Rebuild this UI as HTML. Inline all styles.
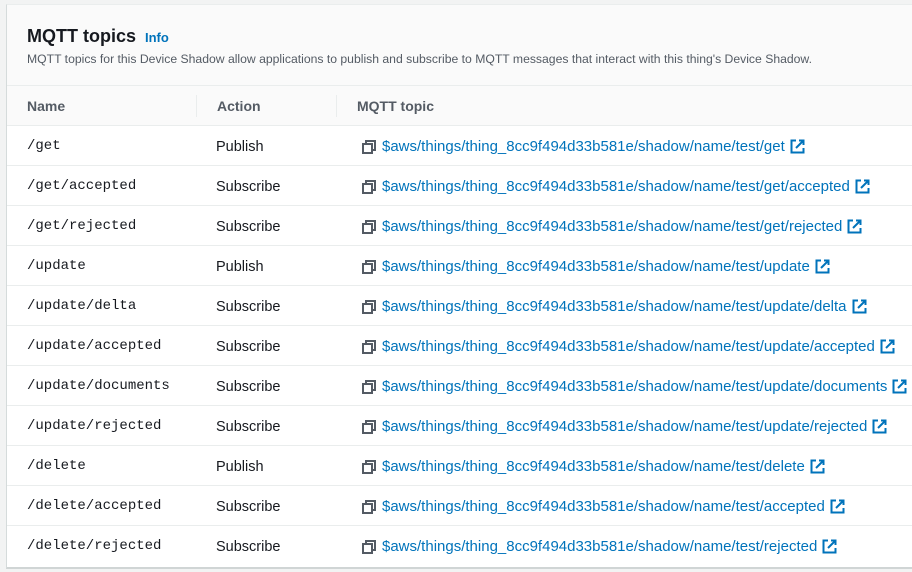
<!DOCTYPE html>
<html><head><style>
body{margin:0;background:#f2f3f3;width:912px;height:572px;overflow:hidden;font-family:"Liberation Sans",sans-serif;}
.card{position:absolute;left:6px;top:4px;width:920px;height:562px;background:#fff;border-left:1px solid #d5dbdb;border-top:1px solid #eaeded;border-bottom:2px solid #d0d5d5;}
.hdr{background:#fafafa;height:80px;border-bottom:1px solid #eaeded;position:relative;}
.title{position:absolute;left:20px;top:21px;font-size:18px;font-weight:bold;color:#16191f;}
.info{font-size:13px;color:#0073bb;margin-left:4px;font-weight:bold;}
.desc{position:absolute;left:20px;top:47px;font-size:12.2px;color:#545b64;}
.th{height:39px;background:#fafafa;border-bottom:1px solid #eaeded;position:relative;font-size:14px;font-weight:bold;color:#545b64;}
.th span{position:absolute;top:12px;}
.sep{position:absolute;top:9px;width:1px;height:22px;background:#eaeded;}
.row{height:39px;border-bottom:1px solid #eaeded;position:relative;font-size:14.5px;color:#16191f;}
.row .n{position:absolute;left:20px;top:12px;font-family:"Liberation Mono",monospace;font-size:14px;}
.row .a{position:absolute;left:209px;top:13px;}
.row .t{position:absolute;left:355px;top:12px;color:#0073bb;white-space:nowrap;display:flex;align-items:center;font-size:15px;}
.row:last-child{border-bottom:none;}
svg{display:block}
</style></head><body>
<div class="card">
<div class="hdr"><div class="title">MQTT topics <span class="info">Info</span></div>
<div class="desc">MQTT topics for this Device Shadow allow applications to publish and subscribe to MQTT messages that interact with this thing's Device Shadow.</div></div>
<div class="th"><span style="left:20px">Name</span><div class="sep" style="left:189px"></div><span style="left:210px">Action</span><div class="sep" style="left:329px"></div><span style="left:350px">MQTT topic</span></div>
<div id="rows"></div>
</div>
<script>
var d=[["/get","Publish","/get"],["/get/accepted","Subscribe","/get/accepted"],["/get/rejected","Subscribe","/get/rejected"],["/update","Publish","/update"],["/update/delta","Subscribe","/update/delta"],["/update/accepted","Subscribe","/update/accepted"],["/update/documents","Subscribe","/update/documents"],["/update/rejected","Subscribe","/update/rejected"],["/delete","Publish","/delete"],["/delete/accepted","Subscribe","/accepted"],["/delete/rejected","Subscribe","/rejected"]];
var cp='<svg width="14" height="14" viewBox="0 0 14 14" style="margin-right:6px"><rect x="4" y="1" width="9" height="9" fill="none" stroke="#545b64" stroke-width="2"/><rect x="1" y="4" width="9" height="9" fill="#fff" stroke="#545b64" stroke-width="2"/></svg>';
var ex='<svg width="15" height="15" viewBox="0 0 15 15" style="margin-left:5px"><path d="M6 1.5H1.5v12h12V9" fill="none" stroke="#0073bb" stroke-width="2"/><path d="M9 1.5h4.5V6M13.5 1.5L6 9" fill="none" stroke="#0073bb" stroke-width="2"/></svg>';
var h="";d.forEach(function(r){h+='<div class="row"><span class="n">'+r[0]+'</span><span class="a">'+r[1]+'</span><span class="t">'+cp+'$aws/things/thing_8cc9f494d33b581e/shadow/name/test'+r[2]+ex+'</span></div>';});
document.getElementById("rows").innerHTML=h;
</script>
</body></html>
